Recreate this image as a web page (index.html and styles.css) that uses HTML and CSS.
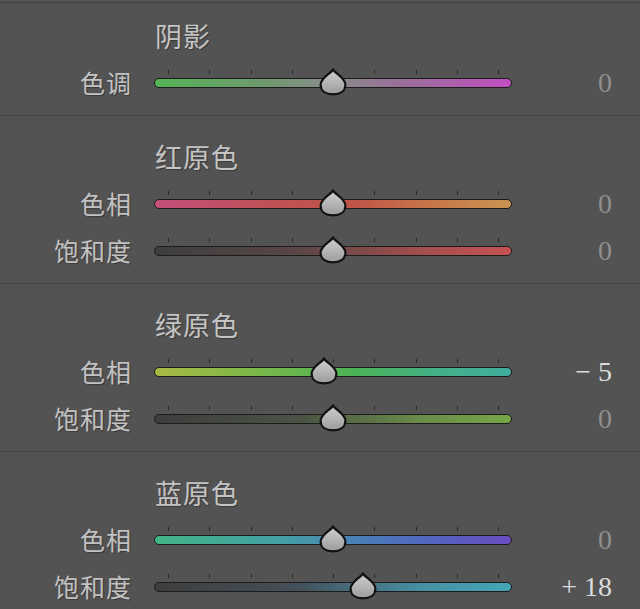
FILE: index.html
```html
<html>
    <head>
        <meta charset="utf-8">
        <link rel="stylesheet" href="styles.css">
    </head>
    <body>
        <svg class="defs" width="0" height="0">
            <defs>
                <linearGradient id="knob" x1="0" y1="0" x2="0" y2="1">
                    <stop offset="0" stop-color="#cfcfcf"/>
                    <stop offset="1" stop-color="#9c9c9c"/>
                </linearGradient>
            </defs>
        </svg>
        <div class="panel">
            <div class="section first">
                <div class="heading">阴影</div>
                <div class="row">
                    <div class="label">色调</div>
                    <div class="slider">
                        <div class="ticks"><i></i><i></i><i></i><i></i><i></i><i></i><i></i><i></i><i></i></div>
                        <div class="track shadow-hue"></div>
                        <svg class="thumb" style="left:50%" viewBox="0 0 26 26"><path d="M13 1.5 C15 5 24.5 9 24.5 15.5 C24.5 21.5 19.5 24.5 13 24.5 C6.5 24.5 1.5 21.5 1.5 15.5 C1.5 9 11 5 13 1.5 Z"/></svg>
                    </div>
                    <div class="value">0</div>
                </div>
            </div>

            <div class="section">
                <div class="heading">红原色</div>
                <div class="row">
                    <div class="label">色相</div>
                    <div class="slider">
                        <div class="ticks"><i></i><i></i><i></i><i></i><i></i><i></i><i></i><i></i><i></i></div>
                        <div class="track red-hue"></div>
                        <svg class="thumb" style="left:50%" viewBox="0 0 26 26"><path d="M13 1.5 C15 5 24.5 9 24.5 15.5 C24.5 21.5 19.5 24.5 13 24.5 C6.5 24.5 1.5 21.5 1.5 15.5 C1.5 9 11 5 13 1.5 Z"/></svg>
                    </div>
                    <div class="value">0</div>
                </div>
                <div class="row">
                    <div class="label">饱和度</div>
                    <div class="slider">
                        <div class="ticks"><i></i><i></i><i></i><i></i><i></i><i></i><i></i><i></i><i></i></div>
                        <div class="track red-sat"></div>
                        <svg class="thumb" style="left:50%" viewBox="0 0 26 26"><path d="M13 1.5 C15 5 24.5 9 24.5 15.5 C24.5 21.5 19.5 24.5 13 24.5 C6.5 24.5 1.5 21.5 1.5 15.5 C1.5 9 11 5 13 1.5 Z"/></svg>
                    </div>
                    <div class="value">0</div>
                </div>
            </div>

            <div class="section">
                <div class="heading">绿原色</div>
                <div class="row">
                    <div class="label">色相</div>
                    <div class="slider">
                        <div class="ticks"><i></i><i></i><i></i><i></i><i></i><i></i><i></i><i></i><i></i></div>
                        <div class="track green-hue"></div>
                        <svg class="thumb" style="left:47.5%" viewBox="0 0 26 26"><path d="M13 1.5 C15 5 24.5 9 24.5 15.5 C24.5 21.5 19.5 24.5 13 24.5 C6.5 24.5 1.5 21.5 1.5 15.5 C1.5 9 11 5 13 1.5 Z"/></svg>
                    </div>
                    <div class="value set">&minus; 5</div>
                </div>
                <div class="row">
                    <div class="label">饱和度</div>
                    <div class="slider">
                        <div class="ticks"><i></i><i></i><i></i><i></i><i></i><i></i><i></i><i></i><i></i></div>
                        <div class="track green-sat"></div>
                        <svg class="thumb" style="left:50%" viewBox="0 0 26 26"><path d="M13 1.5 C15 5 24.5 9 24.5 15.5 C24.5 21.5 19.5 24.5 13 24.5 C6.5 24.5 1.5 21.5 1.5 15.5 C1.5 9 11 5 13 1.5 Z"/></svg>
                    </div>
                    <div class="value">0</div>
                </div>
            </div>

            <div class="section">
                <div class="heading">蓝原色</div>
                <div class="row">
                    <div class="label">色相</div>
                    <div class="slider">
                        <div class="ticks"><i></i><i></i><i></i><i></i><i></i><i></i><i></i><i></i><i></i></div>
                        <div class="track blue-hue"></div>
                        <svg class="thumb" style="left:50%" viewBox="0 0 26 26"><path d="M13 1.5 C15 5 24.5 9 24.5 15.5 C24.5 21.5 19.5 24.5 13 24.5 C6.5 24.5 1.5 21.5 1.5 15.5 C1.5 9 11 5 13 1.5 Z"/></svg>
                    </div>
                    <div class="value">0</div>
                </div>
                <div class="row">
                    <div class="label">饱和度</div>
                    <div class="slider">
                        <div class="ticks"><i></i><i></i><i></i><i></i><i></i><i></i><i></i><i></i><i></i></div>
                        <div class="track blue-sat"></div>
                        <svg class="thumb" style="left:58.5%" viewBox="0 0 26 26"><path d="M13 1.5 C15 5 24.5 9 24.5 15.5 C24.5 21.5 19.5 24.5 13 24.5 C6.5 24.5 1.5 21.5 1.5 15.5 C1.5 9 11 5 13 1.5 Z"/></svg>
                    </div>
                    <div class="value set">+ 18</div>
                </div>
            </div>
        </div>
    </body>
</html>
```

FILE: styles.css
```css
*{
    box-sizing: border-box;
}
body{
    margin: 0px;
    padding-top: 2px;
    background: #535353;
    font-family: "Noto Sans CJK SC", "Noto Sans", sans-serif;
    color: #c2c2c2;
    overflow: hidden;
}
.defs{
    position: absolute;
}
.panel{
    width: 640px;
}
.section{
    border-top: 1px solid #434343;
    padding: 18px 0px 9px 0px;
}
.section.first{
    padding-top: 10px;
}
.heading{
    height: 46px;
    line-height: 46px;
    padding-left: 155px;
    font-size: 27px;
    letter-spacing: 1px;
    color: #c4c4c4;
    text-shadow: 1px 1px 1px #3a3a3a;
}
.row{
    display: flex;
    align-items: center;
    height: 47px;
}
.label{
    width: 132px;
    text-align: right;
    font-size: 25px;
    letter-spacing: 1px;
    line-height: 47px;
    text-shadow: 1px 1px 1px #3a3a3a;
}
.slider{
    position: relative;
    width: 358px;
    margin-left: 22px;
    padding-bottom: 8px;
    display: flex;
    flex-direction: column;
}
.ticks{
    display: flex;
    justify-content: space-between;
    height: 4px;
    margin: 0px 13px 4px 14px;
}
.ticks i{
    width: 1px;
    height: 4px;
    background: #2a2a2a;
}
.track{
    height: 10px;
    border-radius: 5px;
    border: 1.5px solid #1c1c1c;
}
.thumb{
    position: absolute;
    top: -2px;
    width: 28px;
    height: 28px;
    margin-left: -14px;
}
.thumb path{
    fill: url(#knob);
    stroke: #111;
    stroke-width: 2;
}
.value{
    width: 100px;
    text-align: right;
    font-family: "Liberation Serif", serif;
    font-size: 28px;
    color: #8e8e8e;
}
.value.set{
    color: #dcdcdc;
}

.shadow-hue{
    background: linear-gradient(90deg, #55b455 0%, #6e9a6e 30%, #8a8a8a 50%, #9a6e9a 70%, #c24fc2 100%);
}
.red-hue{
    background: linear-gradient(90deg, #c4507c 0%, #c25058 30%, #c05448 55%, #c87a4a 80%, #c89450 100%);
}
.red-sat{
    background: linear-gradient(90deg, #3e3e3e 0%, #5a4646 40%, #a44e4e 75%, #c65252 100%);
}
.green-hue{
    background: linear-gradient(90deg, #a9b944 0%, #78b84a 30%, #4cb254 55%, #44b088 80%, #40ad9e 100%);
}
.green-sat{
    background: linear-gradient(90deg, #3e3e3e 0%, #4a5244 40%, #6a8c48 75%, #76a648 100%);
}
.blue-hue{
    background: linear-gradient(90deg, #43b486 0%, #44a0a4 35%, #4a7ab8 60%, #5462c0 80%, #6a4cc0 100%);
}
.blue-sat{
    background: linear-gradient(90deg, #3e3e3e 0%, #44505a 40%, #4690a4 75%, #44a6b6 100%);
}
```
